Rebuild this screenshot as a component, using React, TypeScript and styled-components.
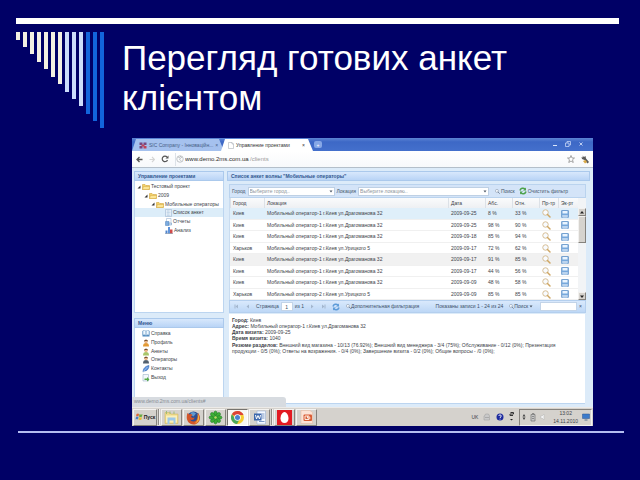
import React from "react";
import styled, { createGlobalStyle } from "styled-components";

const GlobalStyle = createGlobalStyle`
  * { box-sizing: border-box; }
  body { margin: 0; background: #000066; }
  button, input, select { font: inherit; color: inherit; margin: 0; padding: 0; border: 0; background: none; border-radius: 0; min-width: 0; }
  ul { list-style: none; margin: 0; padding: 0; }
  a { color: inherit; text-decoration: none; }
  svg { display: block; flex: none; }
`;

/* ---------- slide ---------- */
const Slide = styled.main`
  min-height: 100vh;
  padding: 18px 16px 0;
  background: #000066;
  font-family: "Liberation Sans", Arial, sans-serif;
`;
const TopBar = styled.div`
  height: 6px;
  margin-right: 5px;
  background: #fff;
`;
const TitleRow = styled.header`
  display: flex;
  align-items: flex-start;
  gap: 18px;
  height: 114px;
  padding-top: 8px;
`;
const Stripes = styled.div`
  display: flex;
  flex: none;
  align-items: flex-start;
  gap: 3px;
`;
const Stripe = styled.i<{ $h: number; $c: string }>`
  width: 4px;
  height: ${(p) => p.$h}px;
  background: ${(p) => p.$c};
`;
const Title = styled.h1`
  margin: 6px 0 0;
  color: #fff;
  font-size: 35px;
  font-weight: 400;
  line-height: 40px;
`;
const BottomRule = styled.div`
  height: 2px;
  margin: 5px 0 0 2px;
  background: #b4bcf0;
`;

/* ---------- browser ---------- */
const Browser = styled.section`
  display: flex;
  flex-direction: column;
  margin: 0 31px 0 116px;
  overflow: hidden;
  background: #dcebf9;
  color: #3c4248;
  font-size: 5px;
  line-height: 7px;
  white-space: nowrap;
`;
const TabStrip = styled.div`
  display: flex;
  align-items: flex-end;
  height: 13px;
  background: linear-gradient(#5c84d4, #3d68c6 30%, #4470cc);
`;
const Tab = styled.button<{ $active?: boolean }>`
  display: flex;
  align-items: center;
  gap: 2px;
  width: 92px;
  height: 12px;
  margin-left: ${(p) => (p.$active ? "-3px" : "0")};
  padding: 0 8px 0 7px;
  background: ${(p) => (p.$active ? "#fff" : "#a5c1ee")};
  color: ${(p) => (p.$active ? "#333" : "#465d86")};
  clip-path: polygon(4px 0, calc(100% - 5px) 0, 100% 100%, 0 100%);
  text-align: left;
  span { flex: 1; }
`;
const NewTab = styled.button`
  width: 8px;
  height: 7px;
  margin: 0 auto 3px 1px;
  border-radius: 2px;
  background: #86a7e6;
  color: #fff;
  line-height: 6px;
`;
const WindowButtons = styled.div`
  display: flex;
  gap: 7px;
  padding: 0 9px 4px 0;
  button { display: block; }
`;
const NavBar = styled.div`
  display: flex;
  align-items: center;
  gap: 6px;
  height: 17px;
  padding: 0 3px 0 4px;
  border-bottom: 1px solid #b4bfca;
  background: linear-gradient(#fff, #f7f9fb);
`;
const IconButton = styled.button`
  display: flex;
  align-items: center;
  justify-content: center;
`;
const Address = styled.label`
  display: flex;
  flex: 1;
  align-items: center;
  height: 13px;
  border-left: 1px solid #dde2e8;
  color: #2b2b2b;
  font-size: 6px;
  line-height: 10px;
  svg { margin-right: 1px; }
  input { width: 65px; outline: 0; }
  span { flex: 1; color: #9b9b9b; }
`;

/* ---------- application ---------- */
const AppBody = styled.div`
  display: grid;
  grid-template-columns: 90px minmax(0, 1fr);
  gap: 3px;
  height: 239px;
  padding: 3px 3px 0 2px;
  background: #dcebf9;
`;
const Column = styled.div`
  display: flex;
  flex-direction: column;
  min-width: 0;
`;
const PanelHead = styled.h2`
  flex: none;
  height: 10px;
  margin: 0;
  padding: 1px 3px;
  border: 1px solid #abc9ec;
  background: linear-gradient(#d8e8fc, #b9d4f6);
  color: #31578f;
  font-size: 5px;
  font-weight: 700;
  line-height: 6px;
`;
const TreeBox = styled.ul`
  height: 132px;
  margin-bottom: 5px;
  padding-top: 1px;
  border: 1px solid #bcd5f0;
  border-top: 0;
  background: #fff;
`;
const TreeItem = styled.li<{ $level: number; $selected?: boolean }>`
  display: flex;
  height: 9px;
  padding-left: ${(p) => p.$level * 7 + 2}px;
  background: ${(p) => (p.$selected ? "#dcedf9" : "transparent")};
  &:nth-child(3n) { height: 8px; }
  button { display: flex; align-items: center; gap: 1px; }
`;
const MenuBox = styled.ul`
  flex: 1;
  padding: 1px 0 0 7px;
  border: 1px solid #bcd5f0;
  border-width: 0 1px;
  background: #fff;
  li { height: 9px; }
  li:nth-child(3n) { height: 8px; }
  a { display: flex; align-items: center; gap: 1px; height: 9px; }
`;
const StatusBar = styled.div`
  width: 154px;
  height: 10px;
  margin: 0 0 0 -2px;
  padding: 1px 2px;
  border-radius: 0 3px 0 0;
  background: #d7dbe0;
  color: #878c92;
  position: relative;
  z-index: 1;
`;
const Inner = styled.div`
  display: flex;
  flex: 1;
  flex-direction: column;
  margin: 3px 4px 3px 2px;
  min-height: 0;
`;
const Filters = styled.div`
  display: flex;
  flex: none;
  align-items: center;
  height: 14px;
  padding: 0 17px 0 2px;
  border: 1px solid #bad3ee;
  background: #d4e4f8;
  color: #46566b;
`;
const Combo = styled.label<{ $grow: number }>`
  display: flex;
  flex: ${(p) => p.$grow} 1 0;
  align-items: center;
  gap: 2px;
  min-width: 0;
`;
const SelectWrap = styled.span`
  display: flex;
  flex: 1;
  align-items: center;
  height: 9px;
  margin-right: 2px;
  border: 1px solid #bed0e4;
  background: #fff;
  select { flex: 1; height: 7px; padding-left: 1px; appearance: none; outline: 0; color: #8e959c; line-height: 7px; }
`;
const ToolButton = styled.button`
  display: flex;
  align-items: center;
  gap: 1px;
  margin-left: 4px;
`;
const GridBox = styled.div`
  display: flex;
  border-left: 1px solid #c9dcf0;
  background: #fff;
`;
const Table = styled.table`
  flex: 1;
  width: 100%;
  min-width: 0;
  border-collapse: separate;
  border-spacing: 0;
  table-layout: fixed;
  th, td { overflow: hidden; padding: 0 0 0 2px; text-align: left; font-weight: 400; }
  th { height: 10px; border-left: 1px solid #dce1e7; background: linear-gradient(#fafbfc, #eef0f3); }
  td { padding-left: 3px; }
`;
const Row = styled.tr<{ $tone?: string }>`
  height: 12px;
  background: ${(p) => p.$tone || "#fff"};
  &:nth-child(even) { height: 11px; }
  td { border-bottom: 1px solid #f0f0f0; }
`;
const Col = styled.col<{ $w?: number }>`
  width: ${(p) => (p.$w ? `${p.$w}px` : "auto")};
`;
const Scroll = styled.div`
  display: flex;
  flex: none;
  flex-direction: column;
  width: 8px;
  padding-top: 10px;
  background: #f2f4f6;
  button { display: flex; align-items: center; justify-content: center; height: 8px; background: #d6d3ce; border: 1px solid; border-color: #f2f1ef #85827d #85827d #f2f1ef; }
`;
const Thumb = styled.div`
  height: 27px;
  margin-bottom: auto;
  border: 1px solid;
  border-color: #f2f1ef #85827d #85827d #f2f1ef;
  background: #d6d3ce;
`;
const Pager = styled.nav`
  display: flex;
  flex: none;
  align-items: center;
  gap: 6px;
  height: 13px;
  padding: 0 3px 0 4px;
  border: 1px solid #b4cfee;
  background: linear-gradient(#d9e9fc, #bdd7f6);
  color: #3d5068;
  input { height: 9px; background: #fff; border: 1px solid #c3d4e8; text-align: center; outline: 0; }
`;
const PageLabel = styled.label`
  display: flex;
  align-items: center;
  gap: 2px;
`;
const PageInput = styled.input` width: 12px; `;
const SearchInput = styled.input` width: 37px; `;
const Total = styled.span`
  margin-left: auto;
`;
const Details = styled.article`
  flex: 1;
  margin: 1px 1px 0 0;
  padding: 3px 16px 0 3px;
  background: #fff;
  border-bottom: 1px solid #bcd5f0;
  line-height: 6px;
  white-space: normal;
  p { margin: 0; }
  p:last-child { margin-top: 1px; }
`;

/* ---------- taskbar ---------- */
const Taskbar = styled.footer`
  display: flex;
  align-items: center;
  gap: 1px;
  height: 19px;
  padding: 0 1px;
  border-top: 1px solid #eceae7;
  background: #d5d2cd;
`;
const Task = styled.button<{ $active?: boolean; $wide?: boolean }>`
  display: flex;
  align-items: center;
  justify-content: center;
  gap: 1px;
  width: ${(p) => (p.$wide ? 24 : 21)}px;
  height: 17px;
  border: 1px solid;
  border-color: ${(p) => (p.$active ? "#76736e #fff #fff #76736e" : "#f4f3f1 #85827d #85827d #f4f3f1")};
  background: ${(p) => (p.$active ? "#f7f6f4" : "#d5d2cd")};
  color: #222;
  font-weight: 700;
`;
const Divider = styled.i`
  width: 2px;
  height: 16px;
  border-left: 1px solid #8f8c87;
  background: #f1f0ee;
`;
const Tray = styled.div`
  display: flex;
  align-items: center;
  gap: 5px;
  margin-left: auto;
`;
const Notify = styled.div`
  display: flex;
  align-items: center;
  gap: 4px;
  height: 17px;
  padding: 0 1px 0 2px;
  border: 1px solid;
  border-color: #85827d #f4f3f1 #f4f3f1 #85827d;
`;
const Clock = styled.time`
  margin-left: 3px;
  text-align: center;
  line-height: 8px;
`;

/* ---------- icons ---------- */
const Folder = () => (
  <svg width="8" height="7" viewBox="0 0 16 14"><path d="M1 3h5l2 2h7v8H1z" fill="#f3d168" stroke="#c9982c" /><path d="M3 7h13l-2 6H1z" fill="#fbe596" stroke="#c9982c" strokeWidth=".7" /></svg>
);
const Arrow = () => (
  <svg width="4" height="4" viewBox="0 0 8 8"><path d="M7 1v6H1z" fill="#333" /></svg>
);
const Sheet = () => (
  <svg width="7" height="8" viewBox="0 0 14 16"><path d="M1 1h12v14H1z" fill="#eef5fc" stroke="#8fa9c6" /><path d="M3 4h8M3 7h8M3 10h8M3 13h8M6 2v12" stroke="#a9c4de" /></svg>
);
const Report = () => (
  <svg width="7" height="8" viewBox="0 0 14 16"><path d="M3 1h9v11H3z" fill="#fff" stroke="#86a7cb" /><path d="M1 7h7v8H1z" fill="#7cace0" stroke="#4b7eb8" /><path d="M8 10h5v4H8z" fill="#d7e6f6" stroke="#6791bd" /></svg>
);
const Chart = () => (
  <svg width="8" height="8" viewBox="0 0 16 16"><path d="M1 9h4v6H1z" fill="#4f85cd" /><path d="M6 2h4v13H6z" fill="#5f93da" /><path d="M10 7h5v8h-5z" fill="#d04b4b" /><path d="M0 15h16" stroke="#6d7d92" /></svg>
);
const Magnifier = ({ size = 9, gold = true }: { size?: number; gold?: boolean }) => (
  <svg width={size} height={size} viewBox="0 0 18 18"><circle cx="7" cy="7" r="5.5" fill="#f8fbff" stroke={gold ? "#d6bf95" : "#8797aa"} strokeWidth="2" /><path d="M11 11l5 5" stroke={gold ? "#cfa765" : "#6e7c90"} strokeWidth="3" strokeLinecap="round" /></svg>
);
const Disk = () => (
  <svg width="8" height="8" viewBox="0 0 16 16"><rect x=".7" y=".7" width="14.6" height="14.6" rx="2" fill="#76a8dc" stroke="#4a7fb9" /><path d="M3 2h10v5H3z" fill="#e9f4ff" /><path d="M3 10h10v5H3z" fill="#dceafa" /><path d="M4 12h8" stroke="#5a91c8" /></svg>
);
const Refresh = ({ color }: { color: string }) => (
  <svg width="8" height="8" viewBox="0 0 16 16" fill="none" stroke={color} strokeWidth="3"><path d="M2 7a6 6 0 0 1 10-3M14 9a6 6 0 0 1-10 3" /><path d="M14 1v6H8zM2 15V9h6z" fill={color} stroke="none" /></svg>
);
const Down = () => (
  <svg width="6" height="5" viewBox="0 0 12 10"><path d="M3 3h6L6 7z" fill="#4c5665" /></svg>
);
const Triangle = ({ up }: { up?: boolean }) => (
  <svg width="4" height="3" viewBox="0 0 8 6"><path d={up ? "M0 5h8L4 0z" : "M0 1h8L4 6z"} fill="#222" /></svg>
);
const PageArrow = ({ back, end }: { back?: boolean; end?: boolean }) => (
  <svg width="5" height="5" viewBox="0 0 10 10" fill="#a3b6ce"><path d={back ? "M8 1v8L3 5z" : "M2 1v8l5-4z"} />{end && <path d={back ? "M1 1h2v8H1z" : "M7 1h2v8H7z"} />}</svg>
);
const Person = ({ shirt }: { shirt: string }) => (
  <svg width="8" height="8" viewBox="0 0 16 16"><path d="M2 15c0-5 2-7 6-7s6 2 6 7z" fill={shirt} /><circle cx="8" cy="5" r="3.5" fill="#eab68a" /><path d="M4 5c0-5 8-5 8 0-2-2-5-2-8 0z" fill="#6a4526" /></svg>
);
const Book = () => (
  <svg width="8" height="7" viewBox="0 0 16 14"><path d="M1 2h6l1 1 1-1h6v11H1z" fill="#4f8ac0" /><path d="M2 1q4-1 6 1v9q-2-2-6-1zM14 1q-4-1-6 1v9q2-2 6-1z" fill="#eef7ff" stroke="#6c9dc4" /></svg>
);
const Feather = () => (
  <svg width="8" height="8" viewBox="0 0 16 16"><path d="M2 14C2 7 7 2 14 1c0 7-4 11-9 11z" fill="#5c91dc" stroke="#2f62ad" /><path d="M1 15L11 4" stroke="#dcecff" /></svg>
);
const Exit = () => (
  <svg width="8" height="8" viewBox="0 0 16 16"><path d="M2 1h11v13H2z" fill="#f3f8fc" stroke="#8ba4bc" /><path d="M5 9h5V6l5 5-5 4v-3H5z" fill="#54a945" /></svg>
);
const Chrome = () => (
  <svg width="15" height="15" viewBox="0 0 30 30"><circle cx="15" cy="15" r="13" fill="#f5cc30" /><path d="M15 15L3.7 8.5A13 13 0 0 1 27 10H15z" fill="#dc4437" /><path d="M3.7 8.5A13 13 0 0 0 14 28l5-9-8-1z" fill="#4aa85a" /><circle cx="15" cy="15" r="6.5" fill="#fff" /><circle cx="15" cy="15" r="5" fill="#4a83d0" /></svg>
);
const Firefox = () => (
  <svg width="15" height="15" viewBox="0 0 30 30"><circle cx="15" cy="15" r="12" fill="#2d4f93" /><path d="M10 5q6-3 10 2l-5 6-6-3z" fill="#5f99d0" /><path d="M3 6l4 3q3-2 6 1l-3 3c1 3 4 3 7 2 0 5-6 6-9 4 3 6 14 5 15-4l1-9c8 9 3 23-9 23S-1 17 3 6z" fill="#d2552a" /><path d="M23 7c6 8 4 18-6 20 6-4 8-11 6-20z" fill="#f5b23d" /></svg>
);
const Clover = () => (
  <svg width="15" height="15" viewBox="0 0 30 30"><g fill="#3eae36" stroke="#1c7424">{[0, 45, 90, 135, 180, 225, 270, 315].map((a) => <ellipse key={a} cx="15" cy="7.5" rx="3.6" ry="5.5" transform={`rotate(${a} 15 15)`} />)}</g><circle cx="15" cy="15" r="2.5" fill="#b9dd5c" /></svg>
);
const Explorer = () => (
  <svg width="15" height="15" viewBox="0 0 30 30"><path d="M2 5h9l3 3h14v19H2z" fill="#eed98a" stroke="#cfb35b" /><path d="M4 11h22v14H4z" fill="#fbf0b9" /><path d="M7 15h16v13h-4v-7h-8v7H7z" fill="#9dc8e8" /><path d="M5 2v6M12 3v5M20 3v5" stroke="#9fbd74" strokeWidth="2" /></svg>
);
const Word = () => (
  <svg width="14" height="15" viewBox="0 0 28 30"><path d="M8 2h17v26H8z" fill="#f5f9ff" stroke="#8ba7d1" /><path d="M17 8h6M17 12h6M17 16h6M12 23h11" stroke="#7c9ac7" strokeWidth="2" /><path d="M2 7h15v14H2z" fill="#3c67ac" /><path d="M5 10l2 8 3-7 3 7 2-8" fill="none" stroke="#fff" strokeWidth="2" /></svg>
);
const RedEgg = () => (
  <svg width="15" height="15" viewBox="0 0 30 30"><path d="M0 0h30v30H0z" fill="#e21a22" /><path d="M15 4c5 0 8 8 8 13s-3 9-8 9-8-4-8-9S10 4 15 4z" fill="#fff" /></svg>
);
const Slides = () => (
  <svg width="14" height="14" viewBox="0 0 28 28"><path d="M2 1h18l5 4v22H2z" fill="#fbe3d6" stroke="#e7b49b" /><rect x="7" y="9" width="17" height="13" rx="2" fill="#d95d35" /><path d="M10 12h8v7h-8zM15 12v4h6" fill="none" stroke="#fde9dd" strokeWidth="2" /></svg>
);
const StartFlag = () => (
  <svg width="8" height="8" viewBox="0 0 16 16"><path d="M3 2q3-2 5 0L7 7Q5 5 2 7z" fill="#df6738" /><path d="M9 2q3 2 6 0l-1 5q-3 2-6 0z" fill="#69ab42" /><path d="M2 8q3-2 5 0l-1 5q-2-2-5 0z" fill="#477fc9" /><path d="M8 8q3 2 6 0l-1 5q-3 2-6 0z" fill="#e9bd37" /></svg>
);

/* ---------- data ---------- */
const stripes = [8, 15, 22, 30, 37, 45, 52, 60, 67, 74, 82, 89, 96];
const stripeColor = (i: number) => (i < 7 ? "#f3f0e2" : i < 10 ? "#ccddfb" : "#1265dc");
const first = "Мобильный оператор-1 г.Киев ул.Драгоманова 32";
const second = "Мобильный оператор-2 г.Киев ул.Урицкого 5";
const rows = [
  ["Киев", first, "2009-09-25", "8 %", "33 %"],
  ["Киев", first, "2009-09-25", "98 %", "90 %"],
  ["Киев", first, "2009-09-18", "85 %", "94 %"],
  ["Харьков", second, "2009-09-17", "72 %", "62 %"],
  ["Киев", first, "2009-09-17", "91 %", "85 %"],
  ["Киев", first, "2009-09-17", "44 %", "56 %"],
  ["Киев", first, "2009-09-09", "48 %", "58 %"],
  ["Харьков", second, "2009-09-09", "85 %", "85 %"],
];
const tree = [
  { level: 0, text: "Тестовый проект", icon: <Folder />, open: true },
  { level: 1, text: "2009", icon: <Folder />, open: true },
  { level: 2, text: "Мобильные операторы", icon: <Folder />, open: true },
  { level: 4, text: "Список анкет", icon: <Sheet />, selected: true },
  { level: 4, text: "Отчеты", icon: <Report /> },
  { level: 4, text: "Анализ", icon: <Chart /> },
];
const menu = [
  { text: "Справка", icon: <Book /> },
  { text: "Профиль", icon: <Person shirt="#e39a35" /> },
  { text: "Анкеты", icon: <Person shirt="#a8c46a" /> },
  { text: "Операторы", icon: <Person shirt="#52606f" /> },
  { text: "Контакты", icon: <Feather /> },
  { text: "Выход", icon: <Exit /> },
];

export default function App() {
  return (
    <Slide>
      <GlobalStyle />
      <TopBar />
      <TitleRow>
        <Stripes>{stripes.map((h, i) => <Stripe key={h} $h={h} $c={stripeColor(i)} />)}</Stripes>
        <Title>Перегляд готових анкет<br />клієнтом</Title>
      </TitleRow>
      <Browser>
        <TabStrip>
          <Tab>
            <svg width="8" height="7" viewBox="0 0 16 14"><path d="M1 1h6v5H1zM9 1h6v5H9zM1 8h6v5H1z" fill="#754680" /><path d="M9 8h6v5H9zM5 5h6v4H5z" fill="#c04459" /></svg>
            <span>SIC Company - Інноваційн...</span>×
          </Tab>
          <Tab $active>
            <svg width="6" height="7" viewBox="0 0 12 14"><path d="M1 1h7l3 3v9H1zM8 1v3h3" fill="#fff" stroke="#9aa0a8" /></svg>
            <span>Управление проектами</span>×
          </Tab>
          <NewTab aria-label="Новая вкладка">+</NewTab>
          <WindowButtons>
            <button aria-label="Свернуть"><svg width="6" height="6" viewBox="0 0 12 12"><path d="M2 9h8" stroke="#dbe6fb" strokeWidth="2" /></svg></button>
            <button aria-label="Восстановить"><svg width="6" height="6" viewBox="0 0 12 12" fill="none" stroke="#cbdaf8" strokeWidth="1.5"><path d="M4 4V1h7v7H8M1 4h7v7H1z" /></svg></button>
            <button aria-label="Закрыть"><svg width="6" height="6" viewBox="0 0 12 12"><path d="M3 3l6 6M9 3l-6 6" stroke="#dbe6fb" strokeWidth="1.6" /></svg></button>
          </WindowButtons>
        </TabStrip>
        <NavBar>
          <IconButton aria-label="Назад"><svg width="7" height="7" viewBox="0 0 14 14" fill="none" stroke="#555" strokeWidth="2.6"><path d="M7 2L2 7l5 5M2 7h11" /></svg></IconButton>
          <IconButton aria-label="Вперед"><svg width="6" height="7" viewBox="0 0 12 14" fill="none" stroke="#d5d5d5" strokeWidth="2.2"><path d="M6 2l5 5-5 5M11 7H1" /></svg></IconButton>
          <IconButton aria-label="Обновить"><svg width="8" height="8" viewBox="0 0 16 16"><path d="M13 10a5.5 5.5 0 1 1-1-6" fill="none" stroke="#555" strokeWidth="2.4" /><path d="M15 1v6H9z" fill="#555" /></svg></IconButton>
          <Address>
            <svg width="8" height="8" viewBox="0 0 16 16" fill="none" stroke="#a3a7ac" strokeWidth="1.3"><circle cx="8" cy="8" r="6.5" /><path d="M4 4l5 2-2 3 4 3M8 2l4 4" /></svg>
            <input aria-label="Адрес" defaultValue="www.demo.2ms.com.ua" />
            <span>/clients</span>
          </Address>
          <IconButton aria-label="В закладки"><svg width="8" height="8" viewBox="0 0 16 16"><path d="M8 1l2 5h5l-4 3.500 1.500 5.500L8 12l-4.500 3L5 9.500 1 6h5z" fill="#fff" stroke="#777" strokeWidth="1.300" /></svg></IconButton>
          <IconButton aria-label="Настройки"><svg width="9" height="9" viewBox="0 0 18 18"><path d="M3 1l3 3 3-2 1 5 6 7-3 3-6-7-5-2-1-4 3 1z" fill="#5b5b5b" /><path d="M4 12l5-2 3 4-4 3z" fill="#d9a843" /></svg></IconButton>
        </NavBar>
        <AppBody>
          <Column>
            <PanelHead>Управление проектами</PanelHead>
            <TreeBox>
              {tree.map((t) => (
                <TreeItem key={t.text} $level={t.level} $selected={t.selected}>
                  <button>{t.open && <Arrow />}{t.icon}{t.text}</button>
                </TreeItem>
              ))}
            </TreeBox>
            <PanelHead>Меню</PanelHead>
            <MenuBox>{menu.map((m) => <li key={m.text}><a href="#menu">{m.icon}{m.text}</a></li>)}</MenuBox>
            <StatusBar>www.demo.2ms.com.ua/clients#</StatusBar>
          </Column>
          <Column>
            <PanelHead>Список анкет волны "Мобильные операторы"</PanelHead>
            <Inner>
              <Filters>
                <Combo $grow={105}>Город
                  <SelectWrap><select defaultValue="0"><option value="0">Выберите город..</option></select><Down /></SelectWrap>
                </Combo>
                <Combo $grow={155}>Локация
                  <SelectWrap><select defaultValue="0"><option value="0">Выберите локацию..</option></select><Down /></SelectWrap>
                </Combo>
                <ToolButton><Magnifier size={5} gold={false} />Поиск</ToolButton>
                <ToolButton><Refresh color="#4da24c" />Очистить фильтр</ToolButton>
              </Filters>
              <GridBox>
                <Table>
                  <colgroup><Col $w={34} /><Col /><Col $w={37} /><Col $w={27} /><Col $w={27} /><Col $w={19} /><Col $w={20} /></colgroup>
                  <thead><tr>{["Город", "Локация", "Дата", "Абс.", "Отн.", "Пр-тр", "Эк-рт"].map((h) => <th key={h}>{h}</th>)}</tr></thead>
                  <tbody>
                    {rows.map((r, i) => (
                      <Row key={i} $tone={i === 0 ? "#dfeffa" : i === 4 ? "#f1f1f1" : undefined}>
                        {r.map((c, j) => <td key={j}>{c}</td>)}
                        <td><IconButton aria-label="Просмотр"><Magnifier /></IconButton></td>
                        <td><IconButton aria-label="Экспорт"><Disk /></IconButton></td>
                      </Row>
                    ))}
                  </tbody>
                </Table>
                <Scroll>
                  <button aria-label="Вверх"><Triangle up /></button>
                  <Thumb />
                  <button aria-label="Вниз"><Triangle /></button>
                </Scroll>
              </GridBox>
              <Pager>
                <IconButton aria-label="Первая"><PageArrow back end /></IconButton>
                <IconButton aria-label="Предыдущая"><PageArrow back /></IconButton>
                <PageLabel>Страница<PageInput defaultValue="1" />из 1</PageLabel>
                <IconButton aria-label="Следующая"><PageArrow /></IconButton>
                <IconButton aria-label="Последняя"><PageArrow end /></IconButton>
                <IconButton aria-label="Обновить список"><Refresh color="#5d9bd8" /></IconButton>
                <IconButton><Magnifier size={5} gold={false} />Дополнительная фильтрация</IconButton>
                <Total>Показаны записи 1 - 24 из 24</Total>
                <IconButton><Magnifier size={5} gold={false} />Поиск<Down /></IconButton>
                <PageLabel><SearchInput aria-label="Поиск" />
                  <IconButton aria-label="Очистить">×</IconButton>
                </PageLabel>
              </Pager>
              <Details>
                <p><b>Город:</b> Киев</p>
                <p><b>Адрес:</b> Мобильный оператор-1 г.Киев ул.Драгоманова 32</p>
                <p><b>Дата визита:</b> 2009-09-25</p>
                <p><b>Время визита:</b> 1040</p>
                <p><b>Резюме разделов:</b> Внешний вид магазина - 10/13 (76.92%); Внешний вид менеджера - 3/4 (75%); Обслуживание - 0/12 (0%); Презентация продукции - 0/5 (0%); Ответы на возражения. - 0/4 (0%); Завершение визита - 0/2 (0%); Общие вопросы - /0 (0%);</p>
              </Details>
            </Inner>
          </Column>
        </AppBody>
        <Taskbar>
          <Task $wide><StartFlag />Пуск</Task>
          <Divider />
          <Task aria-label="Проводник"><Explorer /></Task>
          <Task aria-label="Firefox"><Firefox /></Task>
          <Task aria-label="ICQ"><Clover /></Task>
          <Task aria-label="Chrome" $active><Chrome /></Task>
          <Task aria-label="Word"><Word /></Task>
          <Divider />
          <Task aria-label="Опрос"><RedEgg /></Task>
          <Task aria-label="PowerPoint"><Slides /></Task>
          <Tray>
            <span>UK</span>
            <svg width="8" height="8" viewBox="0 0 16 16"><path d="M3 6l2-4h6l2 4v8H2V6z" fill="#c9c9c9" stroke="#999" /><path d="M4 9h8" stroke="#888" /></svg>
            <svg width="8" height="8" viewBox="0 0 16 16"><circle cx="8" cy="8" r="7" fill="#1d2a9e" /><path d="M5.500 6c0-3 5-3 5 0 0 2-2.500 2-2.500 4M8 11.500v1.500" fill="none" stroke="#fff" strokeWidth="1.800" /></svg>
            <svg width="5" height="10" viewBox="0 0 10 20"><path d="M3 1h6v3H2v3h6" fill="none" stroke="#333" strokeWidth="2" /><path d="M2 14h6l-3 3z" fill="#222" /></svg>
            <Notify>
              <svg width="4" height="8" viewBox="0 0 8 16"><path d="M4 2l3 5H1zM4 14l3-5H1z" fill="#444" /></svg>
              <svg width="6" height="9" viewBox="0 0 12 18"><path d="M2 3h8v13H2zM4 1h4v2" fill="#c8c8c8" stroke="#777" strokeWidth="1.500" /><path d="M4 7h4M4 11h4" stroke="#777" strokeWidth="1.500" /></svg>
              <svg width="6" height="8" viewBox="0 0 12 16"><path d="M1 6h3l4-4v12l-4-4H1z" fill="#f4f4f4" stroke="#b5b5b5" /></svg>
              <Clock>13:02<br />14.11.2010</Clock>
              <svg width="8" height="8" viewBox="0 0 16 16"><path d="M1 2h14v9H1z" fill="#3c7bcb" stroke="#2a5490" /><path d="M5 14h6" stroke="#58708e" strokeWidth="2" /></svg>
            </Notify>
          </Tray>
        </Taskbar>
      </Browser>
      <BottomRule />
    </Slide>
  );
}
